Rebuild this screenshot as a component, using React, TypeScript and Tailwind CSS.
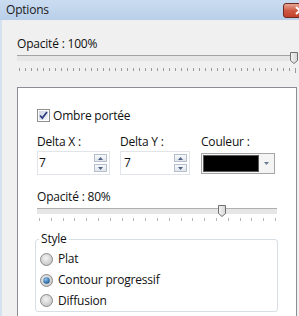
import React from "react";

function Ticks({ width, count, color, last }: { width: number; count: number; color: string; last?: boolean }) {
  const xs: number[] = [];
  for (let i = 0; i < count; i++) xs.push(Math.round(2 + (i * (width - 4)) / (count - 1)) + 0.5);
  return (
    <svg width={width} height={5} className="block">
      {xs.map((x, i) => (
        <line key={i} x1={x} x2={x} y1={0} y2={last && i === count - 1 ? 5 : 3} stroke={color} strokeWidth={1} />
      ))}
    </svg>
  );
}

function Thumb() {
  return (
    <svg width={8} height={12} className="block">
      <defs>
        <linearGradient id="tg" x1="0" y1="0" x2="1" y2="0">
          <stop offset="0" stopColor="#f4f4f4" />
          <stop offset="1" stopColor="#d6d6d6" />
        </linearGradient>
      </defs>
      <path d="M0.5 0.5 H7.5 V8.5 L4 11.5 L0.5 8.5 Z" fill="url(#tg)" stroke="#707070" />
    </svg>
  );
}

function Spinner() {
  return (
    <div className="flex flex-col gap-[2px]">
      {[0, 1].map((i) => (
        <div key={i} className="w-[13px] h-[8px] border border-[#b6c0cc] bg-gradient-to-b from-[#f7f9fb] to-[#e1e6ec] flex items-center justify-center">
          <svg width={5} height={3}>
            {i === 0 ? <path d="M0 3 L2.5 0 L5 3 Z" fill="#4d6185" /> : <path d="M0 0 L2.5 3 L5 0 Z" fill="#4d6185" />}
          </svg>
        </div>
      ))}
    </div>
  );
}

function Radio({ checked }: { checked?: boolean }) {
  return (
    <svg width={13} height={13} className="block">
      <defs>
        <radialGradient id="rg" cx="0.45" cy="0.4" r="0.7">
          <stop offset="0" stopColor="#f4f4f4" />
          <stop offset="1" stopColor="#bdbdbd" />
        </radialGradient>
        <radialGradient id="rb" cx="0.4" cy="0.35" r="0.7">
          <stop offset="0" stopColor="#8fc6f1" />
          <stop offset="1" stopColor="#14508c" />
        </radialGradient>
      </defs>
      <circle cx={6.5} cy={6.5} r={6} fill="url(#rg)" stroke="#8d8d8d" strokeWidth={1} />
      {checked && <circle cx={6.5} cy={6.5} r={3.2} fill="url(#rb)" />}
    </svg>
  );
}

function Checkbox() {
  return (
    <svg width={13} height={13} className="block">
      <defs>
        <linearGradient id="cg" x1="0" y1="0" x2="1" y2="1">
          <stop offset="0" stopColor="#cdd6e6" />
          <stop offset="1" stopColor="#f4f6fa" />
        </linearGradient>
      </defs>
      <rect x={0.5} y={0.5} width={12} height={12} fill="#ffffff" stroke="#8e8f8f" />
      <rect x={2} y={2} width={9} height={9} fill="url(#cg)" />
      <path d="M3 6.5 L5.3 9 L10 3" fill="none" stroke="#2f3f80" strokeWidth={1.8} />
    </svg>
  );
}

export default function App() {
  return (
    <div className="w-[299px] h-[316px] overflow-hidden bg-[#f0f0f0] flex flex-col font-['Open_Sans',sans-serif] text-[12px] text-[#111] tracking-[-0.2px]">
      <div className="h-[20px] shrink-0 bg-gradient-to-b from-[#cadcf0] to-[#b9cfe9] flex items-start">
        <span className="pl-[6px] pt-[1px] leading-[17px] text-[12px] text-[#1a1a1a]">Options</span>
        <div className="ml-auto mr-[-18px] mt-[3px] w-[34px] h-[15px] rounded-[3px] border border-[#6e2a20] bg-gradient-to-b from-[#e7a594] via-[#cf5a44] to-[#c3402a] flex items-center justify-center">
          <svg width={10} height={9}>
            <path d="M1 1 L9 8 M9 1 L1 8" stroke="#fff" strokeWidth={2} />
          </svg>
        </div>
      </div>
      <div className="flex-1 flex flex-col border-l-[2px] border-[#d3e1f0] pl-[15px]">
        <div className="mt-[16px] leading-[16px]">Opacité : 100%</div>
        <div className="relative w-[280px] h-[20px]">
          <div className="absolute left-0 top-[3px] w-[274px] h-[6px] border-t border-[#a3a3a3] bg-[#e6e6e6]" />
          <div className="absolute left-[273px] top-0">
            <Thumb />
          </div>
          <div className="absolute left-0 top-[16px]">
            <Ticks width={280} count={47} color="#9a9a9a" last />
          </div>
        </div>
        <div className="mt-[15px] flex-1 w-[280px] border border-b-0 border-[#8a8d94] bg-white pl-[19px] flex flex-col">
          <div className="mt-[21px] flex items-center gap-[3px] h-[13px]">
            <Checkbox />
            <span className="leading-[13px]">Ombre portée</span>
          </div>
          <div className="mt-[12px] flex">
            <div className="w-[73px] flex flex-col">
              <span className="leading-[16px]">Delta X :</span>
              <div className="mt-[1px] h-[24px] border border-[#e1e5ea] flex items-center pl-[1px] pr-[2px]">
                <span className="flex-1 leading-[16px]">7</span>
                <Spinner />
              </div>
            </div>
            <div className="ml-[10px] w-[70px] flex flex-col">
              <span className="leading-[16px]">Delta Y :</span>
              <div className="mt-[1px] h-[24px] border border-[#e1e5ea] flex items-center pl-[3px] pr-[2px]">
                <span className="flex-1 leading-[16px]">7</span>
                <Spinner />
              </div>
            </div>
            <div className="ml-[11px] w-[74px] flex flex-col">
              <span className="leading-[16px]">Couleur :</span>
              <div className="mt-[3px] h-[21px] border border-[#a6a6a6] flex items-stretch p-[1px] bg-[#f4f4f4]">
                <div className="flex-1 bg-black border border-[#5a5a5a]" />
                <div className="w-[14px] flex items-center justify-center">
                  <svg width={5} height={3}>
                    <path d="M0 0 L2.5 3 L5 0 Z" fill="#6b7a93" />
                  </svg>
                </div>
              </div>
            </div>
          </div>
          <div className="mt-[14px] leading-[16px]">Opacité : 80%</div>
          <div className="relative w-[240px] h-[18px]">
            <div className="absolute left-0 top-[3px] w-[240px] h-[6px] border-t border-[#b0b0b0] bg-[#e6e6e6]" />
            <div className="absolute left-[181px] top-0">
              <Thumb />
            </div>
            <div className="absolute left-0 top-[13px]">
              <Ticks width={240} count={21} color="#b5b5b5" />
            </div>
          </div>
          <div className="relative mt-[16px] ml-[-2px] w-[243px] h-[73px] border border-[#d5dfe5] rounded-[3px] flex flex-col pl-[4px] pt-[9px]">
            <span className="absolute left-[3px] top-[-9px] bg-white px-[2px] leading-[16px]">Style</span>
            {["Plat", "Contour progressif", "Diffusion"].map((t, i) => (
              <div key={t} className="flex items-center gap-[5px] h-[21px]">
                <Radio checked={i === 1} />
                <span className="leading-[16px]">{t}</span>
              </div>
            ))}
          </div>
        </div>
      </div>
    </div>
  );
}
